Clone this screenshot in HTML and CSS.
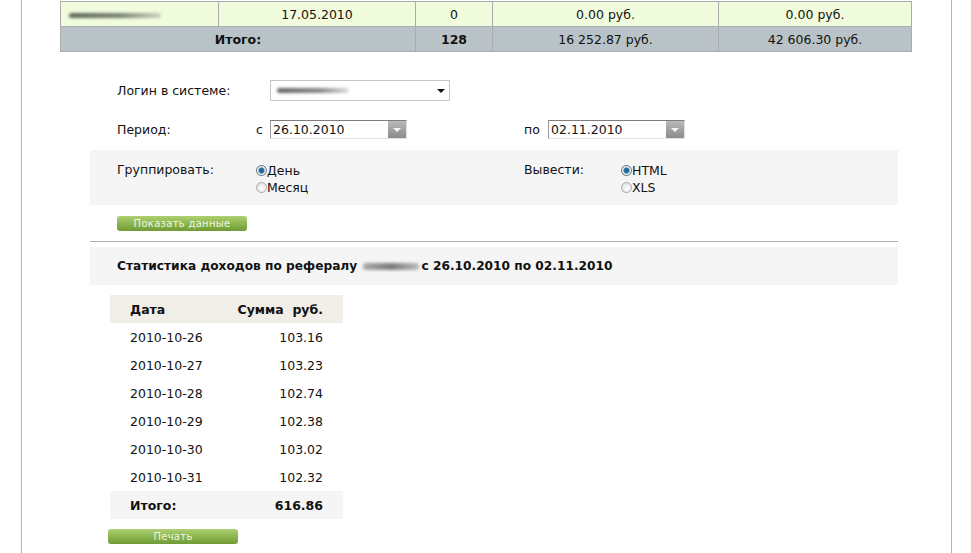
FILE: index.html
```html
<!DOCTYPE html>
<html lang="ru">
<head>
  <meta charset="UTF-8" />
  <meta name="viewport" content="width=device-width, initial-scale=1.0"/>
  <title>Статистика доходов</title>
  <link rel="stylesheet" href="styles.css">
</head>
<body>

  <div class="page">
    <table class="summary">
      <tr class="row-light">
        <td class="c1"><span class="blur blur-login"></span></td>
        <td class="c2">17.05.2010</td>
        <td class="c3">0</td>
        <td class="c4">0.00 руб.</td>
        <td class="c5">0.00 руб.</td>
      </tr>
      <tr class="row-total">
        <td colspan="2"><strong>Итого:</strong></td>
        <td><strong>128</strong></td>
        <td>16 252.87 руб.</td>
        <td>42 606.30 руб.</td>
      </tr>
    </table>

    <div class="filters">
      <div class="field login">
        <label class="label">Логин в системе:</label>
        <div class="select">
          <span class="blur blur-select"></span>
          <span class="caret"></span>
        </div>
      </div>

      <div class="field period">
        <label class="label">Период:</label>
        <div class="range">
          <span class="prefix">с</span>
          <div class="date">
            <span class="date-value">26.10.2010</span>
            <span class="date-btn"></span>
          </div>
        </div>
        <div class="range range-to">
          <span class="prefix">по</span>
          <div class="date">
            <span class="date-value">02.11.2010</span>
            <span class="date-btn"></span>
          </div>
        </div>
      </div>

      <div class="field options">
        <span class="label">Группировать:</span>
        <div class="radios">
          <div class="radio checked">День</div>
          <div class="radio">Месяц</div>
        </div>
        <span class="label label-out">Вывести:</span>
        <div class="radios">
          <div class="radio checked">HTML</div>
          <div class="radio">XLS</div>
        </div>
      </div>

      <div class="actions">
        <button class="btn btn-show">Показать данные</button>
      </div>

      <div class="divider"></div>

      <div class="report-title">
        Статистика доходов по рефералу <span class="blur blur-ref"></span>с 26.10.2010 по 02.11.2010
      </div>

      <table class="stats">
        <tr class="head">
          <th class="date-col">Дата</th>
          <th class="sum-col">Сумма&nbsp; руб.</th>
        </tr>
        <tr><td class="date-col">2010-10-26</td><td class="sum-col">103.16</td></tr>
        <tr><td class="date-col">2010-10-27</td><td class="sum-col">103.23</td></tr>
        <tr><td class="date-col">2010-10-28</td><td class="sum-col">102.74</td></tr>
        <tr><td class="date-col">2010-10-29</td><td class="sum-col">102.38</td></tr>
        <tr><td class="date-col">2010-10-30</td><td class="sum-col">103.02</td></tr>
        <tr><td class="date-col">2010-10-31</td><td class="sum-col">102.32</td></tr>
        <tr class="total">
          <td class="date-col"><strong>Итого:</strong></td>
          <td class="sum-col"><strong>616.86</strong></td>
        </tr>
      </table>

      <button class="btn btn-print">Печать</button>
    </div>
  </div>

</body>
</html>
```

FILE: styles.css
```css
body {
  margin: 0;
  background: #ffffff;
  color: #111111;
  font-family: 'DejaVu Sans', Verdana, sans-serif;
  font-size: 12.5px;
}

.page {
  margin-left: 21px;
  width: 929px;
  min-height: 553px;
  border-left: 1px solid #b4b4b4;
  border-right: 1px solid #b4b4b4;
  padding-top: 1px;
}

/* top summary table */
.summary {
  margin-left: 38px;
  width: 852px;
  border-collapse: collapse;
}

.summary td {
  text-align: center;
  border: 1px solid #a8acad;
  padding: 0;
}

.row-light td {
  background: #f1fcdc;
  height: 24px;
}

.row-total td {
  background: #b9c3c7;
  height: 24px;
  border-top: none;
}

.c1 { width: 157px; text-align: left !important; }
.c2 { width: 196px; }
.c3 { width: 76px; }
.c4 { width: 225px; }

.blur {
  display: inline-block;
  vertical-align: middle;
  border-radius: 3px;
  filter: blur(1.4px);
}

.blur-login {
  width: 92px;
  height: 5px;
  margin-left: 8px;
  background: linear-gradient(90deg, #5f6759, #7a8274 55%, #c9d0c2);
}

.blur-select {
  width: 72px;
  height: 5px;
  margin-left: 6px;
  background: linear-gradient(90deg, #666, #888 60%, #ddd);
}

.blur-ref {
  width: 56px;
  height: 7px;
  margin: 0 2px 0 2px;
  background: linear-gradient(90deg, #aaa, #7c7c7c 50%, #bbb);
}

/* filter form */
.filters {
  margin-left: 68px;
  width: 808px;
}

.field {
  display: flex;
  align-items: center;
  padding-left: 27px;
}

.label {
  width: 139px;
  flex-shrink: 0;
}

.login {
  margin-top: 28px;
  height: 20px;
}

.select {
  position: relative;
  width: 178px;
  height: 19px;
  margin-left: 14px;
  border: 1px solid #c6c6c6;
  display: flex;
  align-items: center;
}

.caret {
  position: absolute;
  right: 4px;
  top: 8px;
  border-left: 4px solid transparent;
  border-right: 4px solid transparent;
  border-top: 4px solid #111;
}

.period {
  margin-top: 20px;
  height: 19px;
}

.range {
  display: flex;
  align-items: center;
  width: 268px;
}

.range-to {
  width: auto;
}

.prefix {
  width: 14px;
}

.range-to .prefix {
  width: 24px;
}

.date {
  display: flex;
  width: 135px;
  height: 17px;
  border-top: 1px solid #7d7d7d;
  border-left: 1px solid #9a9a9a;
  border-right: 1px solid #e2e2e2;
  border-bottom: 1px solid #e2e2e2;
}

.date-value {
  flex: 1;
  padding-left: 2px;
  line-height: 17px;
}

.date-btn {
  position: relative;
  width: 18px;
  background: linear-gradient(#b9b9b9, #8c8c8c);
}

.date-btn::after {
  content: '';
  position: absolute;
  left: 5px;
  top: 7px;
  border-left: 4px solid transparent;
  border-right: 4px solid transparent;
  border-top: 4px solid #f4f4f4;
}

.options {
  margin-top: 11px;
  background: #f5f5f5;
  height: 55px;
  align-items: flex-start;
}

.options .label {
  margin-top: 12px;
}

.radios {
  margin-top: 12px;
  width: 268px;
}

.options .label-out {
  width: 97px;
}

.radio {
  position: relative;
  padding-left: 11px;
  height: 17px;
  line-height: 17px;
}

.radio::before {
  content: '';
  position: absolute;
  left: 0;
  top: 3px;
  width: 9px;
  height: 9px;
  border: 1px solid #a8a8a8;
  border-radius: 50%;
  background: radial-gradient(circle at 60% 60%, #ffffff, #d9d9d9);
}

.radio.checked::before {
  border-color: #5c6f80;
  background: radial-gradient(circle, #1d5f8c 0, #2a74a6 2.5px, #e3e8ec 3.5px, #ffffff 5px);
}

.actions {
  padding-left: 27px;
  margin-top: 11px;
  height: 25px;
}

.btn {
  display: block;
  border: none;
  border-radius: 3px;
  background: linear-gradient(#aed072, #8db64f 50%, #6f9a35);
  color: #eef7e0;
  font-family: 'DejaVu Sans', Verdana, sans-serif;
  font-size: 10px;
  letter-spacing: 0.3px;
  line-height: 15px;
  padding: 0;
  cursor: pointer;
}

.btn-show {
  width: 130px;
  height: 15px;
}

.divider {
  border-top: 1px solid #b0b0b0;
}

.report-title {
  margin-top: 5px;
  height: 38px;
  line-height: 38px;
  background: #f5f5f5;
  padding-left: 27px;
  font-weight: bold;
  font-size: 12.2px;
}

/* stats table */
.stats {
  margin-top: 10px;
  margin-left: 20px;
  width: 233px;
  border-collapse: collapse;
  table-layout: fixed;
  white-space: nowrap;
}

.stats th,
.stats td {
  height: 28px;
  padding: 0;
  text-align: left;
}

.stats .date-col {
  width: 100px;
  padding-left: 20px;
}

.stats .sum-col {
  text-align: right;
  padding-right: 20px;
}

.stats .head th {
  background: #f1eee7;
  font-weight: bold;
}

.stats .total td {
  background: #f5f5f5;
}

.btn-print {
  margin-top: 10px;
  margin-left: 18px;
  width: 130px;
  height: 15px;
}
```
